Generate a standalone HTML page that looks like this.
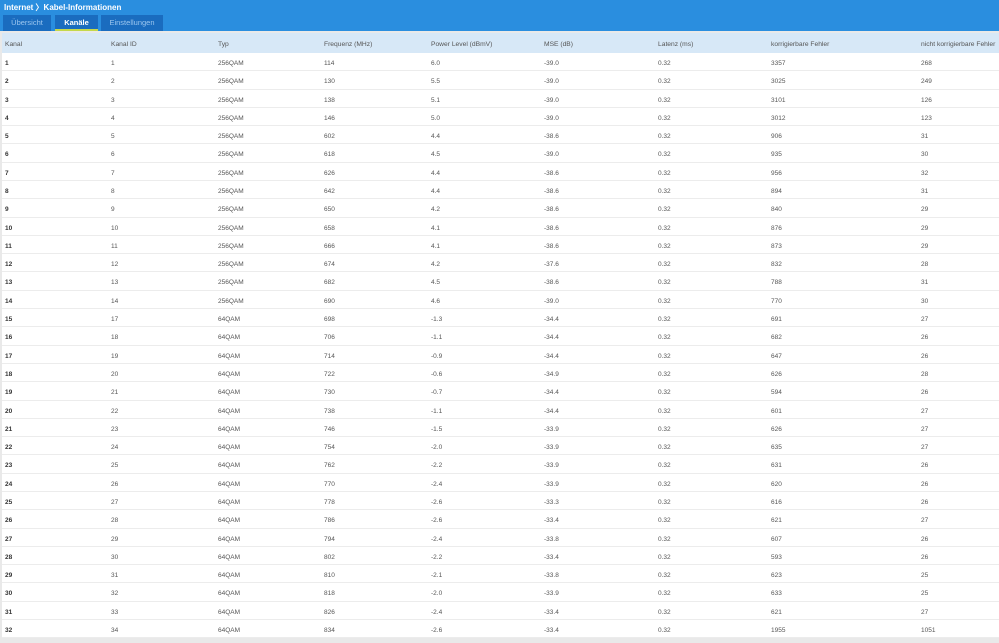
<!DOCTYPE html>
<html><head><meta charset="utf-8"><style>
*{margin:0;padding:0;box-sizing:border-box}
body{width:999px;height:643px;overflow:hidden;background:#e9e9e9;font-family:"Liberation Sans",sans-serif;position:relative}
#top{position:absolute;left:0;top:0;width:999px;height:31px;background:#2a8edf}
#crumb{position:absolute;left:4px;top:2px;font-size:8px;color:#fff;font-weight:bold}
.tab{position:absolute;top:15px;height:16px;background:#1a6cbf;color:#9cc6ef;font-size:7.5px;text-align:center;line-height:15px}
.tab.act{color:#fff;font-weight:bold}
.tab.act:after{content:"";position:absolute;left:0;right:0;bottom:0;height:2px;background:#c5d84a}
#tbl{position:absolute;left:2px;top:33px;width:997px;height:605px;background:#fff}
#hd{position:absolute;left:0;top:0;width:997px;height:20px;background:#d7e8f7}
.r{position:absolute;left:0;width:997px;height:18.29px;border-bottom:1px solid #ececec;font-size:6.5px;color:#555}
.c{position:absolute;top:2px;line-height:18px;white-space:nowrap}
#hd .c{line-height:20px;font-size:6.7px;color:#555}
.r .c:first-child{font-weight:bold;color:#333}
</style></head><body>
<div id="top"><div id="crumb">Internet 〉Kabel-Informationen</div>
<div class="tab" style="left:3px;width:48px">Übersicht</div>
<div class="tab act" style="left:55px;width:43px">Kanäle</div>
<div class="tab" style="left:101px;width:62px">Einstellungen</div></div>
<div id="tbl"><div id="hd">
<span class="c" style="left:3px">Kanal</span><span class="c" style="left:109px">Kanal ID</span><span class="c" style="left:216px">Typ</span><span class="c" style="left:322px">Frequenz (MHz)</span><span class="c" style="left:429px">Power Level (dBmV)</span><span class="c" style="left:542px">MSE (dB)</span><span class="c" style="left:656px">Latenz (ms)</span><span class="c" style="left:769px">korrigierbare Fehler</span><span class="c" style="left:919px">nicht korrigierbare Fehler</span></div>
<div id="rows"></div></div>
<script>
var d=[[1,1,256,114,"6.0","-39.0",3357,268],[2,2,256,130,"5.5","-39.0",3025,249],[3,3,256,138,"5.1","-39.0",3101,126],[4,4,256,146,"5.0","-39.0",3012,123],[5,5,256,602,"4.4","-38.6",906,31],[6,6,256,618,"4.5","-39.0",935,30],[7,7,256,626,"4.4","-38.6",956,32],[8,8,256,642,"4.4","-38.6",894,31],[9,9,256,650,"4.2","-38.6",840,29],[10,10,256,658,"4.1","-38.6",876,29],[11,11,256,666,"4.1","-38.6",873,29],[12,12,256,674,"4.2","-37.6",832,28],[13,13,256,682,"4.5","-38.6",788,31],[14,14,256,690,"4.6","-39.0",770,30],[15,17,64,698,"-1.3","-34.4",691,27],[16,18,64,706,"-1.1","-34.4",682,26],[17,19,64,714,"-0.9","-34.4",647,26],[18,20,64,722,"-0.6","-34.9",626,28],[19,21,64,730,"-0.7","-34.4",594,26],[20,22,64,738,"-1.1","-34.4",601,27],[21,23,64,746,"-1.5","-33.9",626,27],[22,24,64,754,"-2.0","-33.9",635,27],[23,25,64,762,"-2.2","-33.9",631,26],[24,26,64,770,"-2.4","-33.9",620,26],[25,27,64,778,"-2.6","-33.3",616,26],[26,28,64,786,"-2.6","-33.4",621,27],[27,29,64,794,"-2.4","-33.8",607,26],[28,30,64,802,"-2.2","-33.4",593,26],[29,31,64,810,"-2.1","-33.8",623,25],[30,32,64,818,"-2.0","-33.9",633,25],[31,33,64,826,"-2.4","-33.4",621,27],[32,34,64,834,"-2.6","-33.4",1955,1051]];
var x=[3,109,216,322,429,542,656,769,919],h="";
d.forEach(function(r,i){var v=[r[0],r[1],r[2]+"QAM",r[3],r[4],r[5],"0.32",r[6],r[7]];
h+='<div class="r" style="top:'+(20+i*18.29)+'px">';
v.forEach(function(t,j){h+='<span class="c" style="left:'+x[j]+'px">'+t+'</span>'});h+='</div>'});
document.getElementById("rows").innerHTML=h;
</script>
</body></html>
